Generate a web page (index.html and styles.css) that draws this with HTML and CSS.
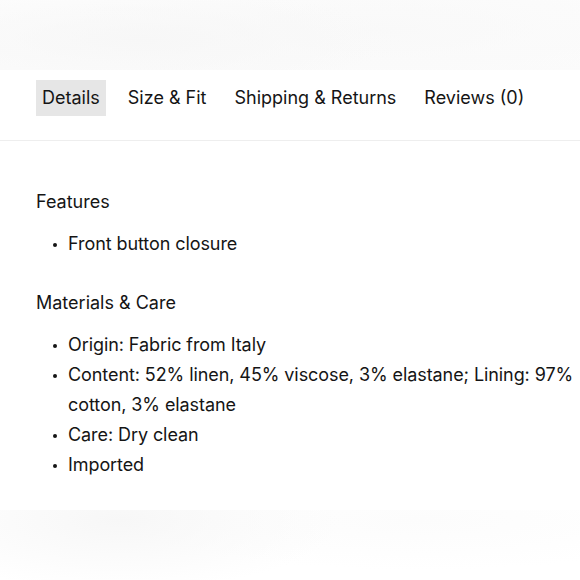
FILE: index.html
```html
<!DOCTYPE html>
<html lang="en">
<head>
<meta charset="utf-8">
<title>Product details</title>
<link rel="stylesheet" href="styles.css">
</head>
<body>
<div class="haze haze-top"></div>
<nav class="tabs">
  <span class="tab active">Details</span>
  <span class="tab">Size &amp; Fit</span>
  <span class="tab">Shipping &amp; Returns</span>
  <span class="tab">Reviews (0)</span>
</nav>
<section class="panel">
  <h3 class="heading">Features</h3>
  <ul class="list">
    <li>Front button closure</li>
  </ul>
  <h3 class="heading heading-next">Materials &amp; Care</h3>
  <ul class="list">
    <li>Origin: Fabric from Italy</li>
    <li>Content: 52% linen, 45% viscose, 3% elastane; Lining: 97% cotton, 3% elastane</li>
    <li>Care: Dry clean</li>
    <li>Imported</li>
  </ul>
</section>
<div class="haze haze-bottom"></div>
</body>
</html>
```

FILE: styles.css
```css
html, body {
  margin: 0;
  padding: 0;
  background: #ffffff;
}
body {
  width: 580px;
  height: 580px;
  overflow: hidden;
  font-family: "Inter", "Noto Sans", sans-serif;
  color: #151515;
  font-size: 18px;
}
.haze {
  width: 100%;
}
.haze-top {
  height: 70px;
  background:
    radial-gradient(ellipse 260px 50px at 140px 40px, #f7f7f7, rgba(250,250,250,0) 100%),
    radial-gradient(ellipse 320px 60px at 380px 30px, #f9f9f9, rgba(252,252,252,0) 100%),
    linear-gradient(#fcfcfc, #fbfbfb);
}
.haze-bottom {
  margin-top: 30px;
  height: 70px;
  background:
    radial-gradient(ellipse 220px 70px at 120px 10px, #f7f7f7, rgba(252,252,252,0) 100%),
    radial-gradient(ellipse 300px 50px at 420px 10px, #fcfcfc, rgba(255,255,255,0) 100%),
    #ffffff;
}
.tabs {
  display: flex;
  gap: 16px;
  padding: 10px 36px 24px;
  border-bottom: 1px solid #eeeeee;
}
.tab {
  height: 36px;
  line-height: 36px;
  padding: 0 6px;
  white-space: nowrap;
}
.tab.active {
  background: #e6e6e6;
}
.panel {
  padding: 46px 0 0 36px;
}
.heading {
  margin: 0;
  font-size: inherit;
  font-weight: 400;
  line-height: 30px;
}
.heading-next {
  margin-top: 29px;
}
.list {
  margin: 12px 0 0;
  padding: 0 0 0 32px;
  line-height: 30px;
  list-style: none;
  letter-spacing: -0.08px;
}
.list li {
  position: relative;
}
.list li::before {
  content: "";
  position: absolute;
  left: -15px;
  top: 14px;
  width: 4px;
  height: 4px;
  border-radius: 50%;
  background: #151515;
}
```
